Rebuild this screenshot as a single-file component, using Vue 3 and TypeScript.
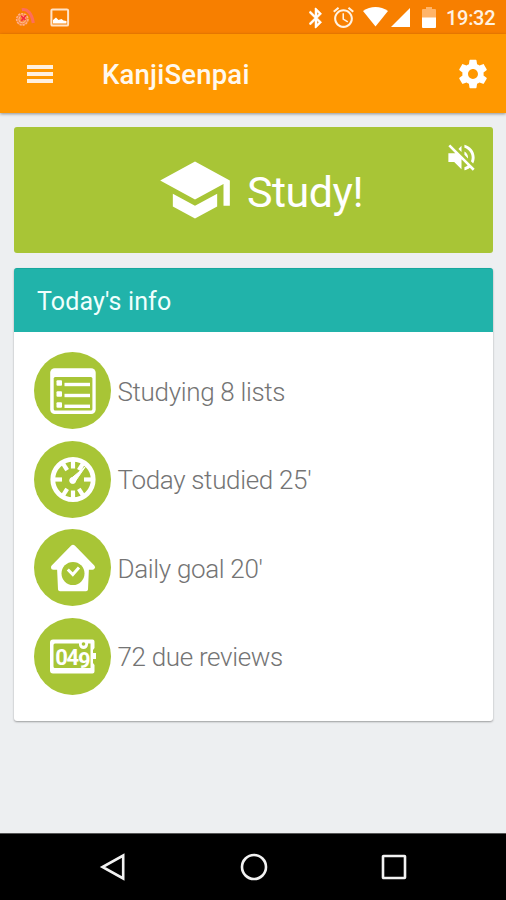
<script setup lang="ts">
interface InfoRow {
  icon: 'list' | 'gauge' | 'house' | 'counter'
  label: string
}

const rows: InfoRow[] = [
  { icon: 'list', label: 'Studying 8 lists' },
  { icon: 'gauge', label: "Today studied 25'" },
  { icon: 'house', label: "Daily goal 20'" },
  { icon: 'counter', label: '72 due reviews' },
]

const ticks: number[] = [0, 32, 90, 148, 180, 212, 270, 328]
</script>

<template>
  <div class="screen">
    <div class="status">
      <svg class="s-app" viewBox="0 0 24 24">
        <path d="M8 3c6-1.500 11 4 12.500 14.500" fill="none" stroke="#ff6a6a" stroke-width="3.400" opacity=".85" />
        <circle cx="8.500" cy="13.500" r="6.200" fill="#fb8a3c" stroke="#ffb08c" stroke-width="1.600" stroke-dasharray="2.400 1" />
        <circle cx="8.500" cy="13.500" r="3.700" fill="none" stroke="#ffc4a0" stroke-width=".9" />
        <path d="M7 9.500l5 4.500M12.500 9l-5 6" stroke="#f5283e" stroke-width="1.700" />
      </svg>
      <svg class="s-photo" viewBox="0 0 20 20">
        <rect x="1.400" y="1.400" width="16.700" height="16.200" rx="1.200" fill="none" stroke="#ffe3c8" stroke-width="2" />
        <path d="M3 15.500v-3.500l3-2.500 2.500 2.500 3-1 2 1.500 3 .5v2.500z" fill="#fff" />
      </svg>
      <span class="grow"></span>
      <svg class="s-bt" viewBox="5 0 13 24">
        <path fill="#fff" stroke="#fff" stroke-width=".5" d="M17.710 7.710L12 2h-1v7.590L6.410 5 5 6.410 10.590 12 5 17.590 6.410 19 11 14.410V22h1l5.710-5.710-4.300-4.290 4.300-4.290zM13 5.830l1.880 1.880L13 9.590V5.830zm1.880 10.460L13 18.170v-3.760l1.880 1.880z" />
      </svg>
      <svg class="s-alarm" viewBox="0 0 24 24">
        <path fill="#fff2e2" d="M22 5.720l-4.600-3.860-1.290 1.530 4.600 3.860L22 5.720zM7.880 3.390L6.600 1.860 2 5.710l1.290 1.530 4.590-3.850zM12.500 8H11v6l4.750 2.850.75-1.230-4-2.370V8zM12 4c-4.970 0-9 4.030-9 9s4.020 9 9 9c4.970 0 9-4.030 9-9s-4.030-9-9-9zm0 16c-3.870 0-7-3.130-7-7s3.130-7 7-7 7 3.130 7 7-3.130 7-7 7z" />
      </svg>
      <svg class="s-wifi" viewBox="0 0 25 20">
        <path fill="#fff" d="M0 4C7.500-1.300 17.500-1.300 25 4L12.500 19.500z" />
      </svg>
      <svg class="s-signal" viewBox="0 0 20 20">
        <path fill="#fff" d="M0 20L20 0v20z" />
      </svg>
      <svg class="s-batt" viewBox="0 0 14 21">
        <path fill="#ffb469" d="M4 0h6v2h3a1 1 0 0 1 1 1v8H0V3a1 1 0 0 1 1-1h3z" />
        <path fill="#fff" d="M0 10.500h14V20a1 1 0 0 1-1 1H1a1 1 0 0 1-1-1z" />
      </svg>
      <span class="time">19:32</span>
    </div>

    <header class="appbar">
      <div class="burger"><i></i><i></i><i></i></div>
      <h1>KanjiSenpai</h1>
      <svg class="gear" viewBox="0 0 24 24">
        <path fill="#fff" d="M19.430 12.980c.04-.32.07-.64.07-.98s-.03-.66-.07-.98l2.110-1.650c.19-.15.24-.42.12-.64l-2-3.460c-.12-.22-.39-.3-.61-.22l-2.490 1c-.52-.4-1.080-.73-1.690-.98l-.38-2.650C14.460 2.180 14.250 2 14 2h-4c-.25 0-.46.18-.49.42l-.38 2.650c-.61.25-1.170.59-1.690.98l-2.490-1c-.23-.09-.49 0-.61.22l-2 3.460c-.13.22-.07.49.12.64l2.110 1.650c-.04.32-.07.65-.07.98s.03.66.07.98l-2.110 1.650c-.19.15-.24.42-.12.64l2 3.460c.12.22.39.3.61.22l2.490-1c.52.4 1.080.73 1.690.98l.38 2.650c.03.24.24.42.49.42h4c.25 0 .46-.18.49-.42l.38-2.650c.61-.25 1.170-.59 1.690-.98l2.490 1c.23.09.49 0 .61-.22l2-3.460c.12-.22.07-.49-.12-.64l-2.110-1.650zM12 15.500c-1.930 0-3.500-1.570-3.500-3.500s1.570-3.500 3.500-3.500 3.500 1.570 3.500 3.500-1.570 3.500-3.500 3.500z" />
      </svg>
    </header>

    <main class="content">
      <section class="study">
        <svg class="cap" viewBox="0 0 24 24">
          <path fill="#fff" d="M5 13.180v4L12 21l7-3.820v-4L12 17l-7-3.820zM12 3L1 9l11 6 9-4.910V17h2V9L12 3z" />
        </svg>
        <span class="study-label">Study!</span>
        <svg class="mute" viewBox="0 0 24 24">
          <path fill="#fff" d="M16.500 12c0-1.770-1.020-3.290-2.500-4.030v2.210l2.450 2.450c.03-.2.05-.41.05-.63zm2.500 0c0 .94-.2 1.820-.54 2.640l1.510 1.510C20.630 14.910 21 13.500 21 12c0-4.280-2.990-7.860-7-8.770v2.060c2.890.86 5 3.540 5 6.710zM4.270 3L3 4.270 7.730 9H3v6h4l5 5v-6.730l4.250 4.250c-.67.52-1.420.93-2.250 1.180v2.060c1.380-.31 2.630-.95 3.690-1.810L19.730 21 21 19.730l-9-9L4.270 3zM12 4L9.910 6.090 12 8.180V4z" />
        </svg>
      </section>

      <section class="info">
        <h2>Today's info</h2>
        <ul>
          <li v-for="row in rows" :key="row.icon">
            <svg class="badge" viewBox="0 0 77 77">
              <circle cx="38.500" cy="38.500" r="38.500" fill="#a8c536" />
              <g v-if="row.icon === 'list'">
                <rect x="16.200" y="16.300" width="45.500" height="45.700" rx="4.500" fill="#fff" />
                <rect x="19.700" y="25" width="38.700" height="33.500" rx="1.500" fill="#a8c536" />
                <g fill="#fff">
                  <rect x="22.500" y="28.300" width="5.500" height="5.500" rx="1" />
                  <rect x="22.500" y="39.300" width="5.500" height="5.500" rx="1" />
                  <rect x="22.500" y="50.300" width="5.500" height="5.500" rx="1" />
                  <rect x="30.500" y="30.800" width="25.500" height="3.400" />
                  <rect x="30.500" y="41.800" width="25.500" height="3.400" />
                  <rect x="30.500" y="52.600" width="25.500" height="3.400" />
                </g>
              </g>
              <g v-else-if="row.icon === 'gauge'" stroke="#fff">
                <circle cx="39" cy="38.500" r="20.200" fill="none" stroke-width="4.800" />
                <path
                  v-for="deg in ticks"
                  :key="deg"
                  d="M39 20v7.500"
                  stroke-width="4.200"
                  :transform="`rotate(${deg} 39 38.500)`"
                />
                <path d="M51.500 25.500L41.500 40 36.500 38z" fill="#fff" stroke-width="1" stroke-linejoin="round" />
                <circle cx="38.700" cy="39.500" r="3" fill="#fff" />
              </g>
              <g v-else-if="row.icon === 'house'">
                <path d="M39 18.300L58.500 38.300H19.500z" fill="#fff" stroke="#fff" stroke-width="5" stroke-linejoin="round" />
                <path d="M23 38h32l-1 22.500a2 2 0 0 1-2 1.800H26a2 2 0 0 1-2-1.800z" fill="#fff" />
                <circle cx="39" cy="44.500" r="11.500" fill="#a8c536" />
                <path d="M33.800 40.500l5 5 6.200-7" fill="none" stroke="#fff" stroke-width="3" />
              </g>
              <g v-else>
                <path d="M19 21.500h39.500a2 2 0 0 1 2 2v6.500l-1.500 2v3h3v6h-3v4l1.500 2v6.500a2 2 0 0 1-2 2H19a3 3 0 0 1-3-3v-28a3 3 0 0 1 3-3z" fill="#fff" />
                <path d="M21 25.500h35.500v24.500H21a1.500 1.500 0 0 1-1.500-1.500V27a1.500 1.500 0 0 1 1.500-1.500z" fill="#a8c536" />
                <path d="M45 25v1.500a4.500 4.500 0 0 0 9 0v-1.500z" fill="#fff" />
                <circle cx="49.500" cy="26" r="1.800" fill="#a8c536" />
                <text class="digits" x="21.300" y="46.700">04<tspan dy="3.300">9</tspan></text>
              </g>
            </svg>
            <span>{{ row.label }}</span>
          </li>
        </ul>
      </section>
    </main>

    <nav class="navbar">
      <svg viewBox="0 0 30 30"><path d="M25.200 3.500v23L4.500 15z" /></svg>
      <svg viewBox="0 0 30 30"><circle cx="15" cy="15" r="12" /></svg>
      <svg viewBox="0 0 30 30"><rect x="4" y="4" width="22" height="22" rx=".5" /></svg>
    </nav>
  </div>
</template>

<style>
body {
  margin: 0;
}
</style>

<style scoped>
.screen {
  width: 506px;
  height: 900px;
  display: flex;
  flex-direction: column;
  overflow: hidden;
  background: #edeff1;
  font-family: Roboto, "Liberation Sans", sans-serif;
}
svg {
  display: block;
  flex: none;
}
.status {
  height: 34px;
  flex: none;
  box-sizing: border-box;
  display: flex;
  align-items: flex-start;
  padding: 7px 10px 0 14px;
  background: #f77f00;
}
.s-app {
  width: 23px;
  height: 22px;
}
.s-photo {
  width: 20px;
  height: 20px;
  margin: 1px 0 0 13px;
}
.grow {
  flex: 1;
}
.s-bt {
  width: 13px;
  height: 24px;
  margin: -1px 9px 0 0;
}
.s-alarm {
  width: 25px;
  height: 25px;
  margin: -2px 7px 0 0;
}
.s-wifi {
  width: 25px;
  height: 20px;
  margin-right: 3px;
}
.s-signal {
  width: 19px;
  height: 19px;
  margin: 1px 12px 0 0;
}
.s-batt {
  width: 14px;
  height: 21px;
  margin-right: 10px;
}
.time {
  width: 50px;
  font-size: 20px;
  line-height: 22px;
  font-weight: 500;
  letter-spacing: -0.3px;
  color: #fff2e2;
  white-space: nowrap;
}
.appbar {
  height: 79px;
  flex: none;
  box-sizing: border-box;
  display: flex;
  align-items: center;
  padding: 0 16px 0 27px;
  background: #ff9800;
  box-shadow: 0 1px 3px rgba(0, 0, 0, 0.4);
  z-index: 1;
}
.burger {
  width: 26px;
  display: flex;
  flex-direction: column;
  gap: 3.500px;
  padding-top: 1px;
}
.burger i {
  height: 3.600px;
  background: #fff0de;
}
.appbar h1 {
  flex: 1;
  margin: 3px 0 0 49px;
  font-size: 27.500px;
  line-height: 32px;
  font-weight: 500;
  letter-spacing: 0.200px;
  color: #fff8ee;
}
.gear {
  width: 34px;
  height: 34px;
}
.content {
  flex: 1;
  padding: 14px 13px 0 14px;
}
.study {
  position: relative;
  height: 126px;
  display: flex;
  align-items: center;
  box-sizing: border-box;
  padding-left: 143px;
  border-radius: 3px;
  background: #a8c536;
}
.cap {
  width: 76px;
  height: 76px;
}
.study-label {
  margin: 4px 0 0 14px;
  font-size: 43px;
  line-height: 50px;
  letter-spacing: -0.500px;
  color: #fff;
}
.mute {
  position: absolute;
  top: 13px;
  right: 14px;
  width: 35px;
  height: 35px;
}
.info {
  height: 453px;
  margin-top: 15px;
  border-radius: 3px;
  background: #fff;
  box-shadow: 0 1px 2px rgba(0, 0, 0, 0.35);
}
.info h2 {
  margin: 0;
  height: 64px;
  padding: 2px 0 0 23px;
  box-sizing: border-box;
  border-radius: 3px 3px 0 0;
  border-top: 1px solid #17a79d;
  background: #21b3aa;
  color: #f0fffd;
  font-size: 25px;
  line-height: 62px;
  font-weight: 400;
  letter-spacing: 0.120px;
}
ul {
  list-style: none;
  margin: 0;
  padding: 20px 0 0 20px;
  display: grid;
  gap: 11.600px;
}
li {
  display: flex;
  align-items: center;
  gap: 6.500px;
  height: 77px;
  font-size: 26px;
  line-height: 32px;
  font-weight: 300;
  letter-spacing: -0.330px;
  color: #747474;
  white-space: nowrap;
}
li span {
  padding-top: 2px;
}
.badge {
  width: 77px;
  height: 77px;
}
.digits {
  font-family: Roboto, sans-serif;
  font-size: 22px;
  font-weight: 700;
  letter-spacing: -1.300px;
  fill: #fff;
}
.navbar {
  height: 67px;
  flex: none;
  box-sizing: border-box;
  display: flex;
  justify-content: space-between;
  align-items: center;
  padding: 0 97px 0 98px;
  border-top: 1px solid #555;
  background: #000;
}
.navbar svg {
  width: 30px;
  height: 30px;
  fill: none;
  stroke: #f2f2f2;
  stroke-width: 2.600;
}
</style>
